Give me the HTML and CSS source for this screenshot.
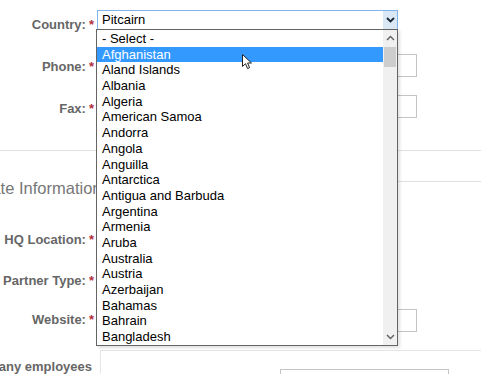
FILE: index.html
```html
<!DOCTYPE html>
<html lang="en">
<head>
    <meta charset="UTF-8">
    <title>Partner Registration</title>
    <link rel="stylesheet" href="styles.css">
</head>
<body>
    <div class="form">
        <div class="row row-country">
            <label class="label"><span>Country:</span><span class="req">*</span></label>
            <div class="field select-wrap">
                <div class="select">
                    <span class="select-value">Pitcairn</span>
                    <span class="select-btn">
                        <svg width="9" height="6" viewBox="0 0 9 6"><path d="M1 1 L4.5 4.5 L8 1" fill="none" stroke="#1c2733" stroke-width="1.8"/></svg>
                    </span>
                </div>
                <div class="dropdown">
                    <ul class="options">
                        <li>- Select -</li>
                        <li class="active">Afghanistan</li>
                        <li>Aland Islands</li>
                        <li>Albania</li>
                        <li>Algeria</li>
                        <li>American Samoa</li>
                        <li>Andorra</li>
                        <li>Angola</li>
                        <li>Anguilla</li>
                        <li>Antarctica</li>
                        <li>Antigua and Barbuda</li>
                        <li>Argentina</li>
                        <li>Armenia</li>
                        <li>Aruba</li>
                        <li>Australia</li>
                        <li>Austria</li>
                        <li>Azerbaijan</li>
                        <li>Bahamas</li>
                        <li>Bahrain</li>
                        <li>Bangladesh</li>
                    </ul>
                    <div class="scrollbar">
                        <span class="scroll-arrow">
                            <svg width="9" height="6" viewBox="0 0 9 6"><path d="M1 5 L4.5 1.5 L8 5" fill="none" stroke="#606060" stroke-width="1.4"/></svg>
                        </span>
                        <span class="scroll-thumb"></span>
                        <span class="scroll-space"></span>
                        <span class="scroll-arrow">
                            <svg width="9" height="6" viewBox="0 0 9 6"><path d="M1 1 L4.5 4.5 L8 1" fill="none" stroke="#606060" stroke-width="1.4"/></svg>
                        </span>
                    </div>
                    <svg class="cursor" width="11" height="16" viewBox="0 0 11 16"><path d="M0.5 0.5 L0.5 12.5 L3.5 9.7 L5.6 14.6 L7.6 13.7 L5.6 9 L9.5 9 Z" fill="#fff" stroke="#222" stroke-width="1"/></svg>
                </div>
            </div>
        </div>
        <div class="row row-phone">
            <label class="label"><span>Phone:</span><span class="req">*</span></label>
            <input class="field text" type="text">
        </div>
        <div class="row row-fax">
            <label class="label"><span>Fax:</span><span class="req">*</span></label>
            <input class="field text" type="text">
        </div>

        <div class="divider"></div>

        <div class="section-head">
            <h2>Corporate Information</h2>
            <span class="rule"></span>
        </div>

        <div class="row row-hq">
            <label class="label"><span>HQ Location:</span><span class="req">*</span></label>
            <div class="field text short"></div>
        </div>
        <div class="row row-type">
            <label class="label"><span>Partner Type:</span><span class="req">*</span></label>
            <div class="field text short"></div>
        </div>
        <div class="row row-web">
            <label class="label"><span>Website:</span><span class="req">*</span></label>
            <input class="field text" type="text">
        </div>
        <div class="row row-emp">
            <label class="label"><span>How many employees</span></label>
            <div class="emp-box">
                <input class="text emp-input" type="text">
            </div>
        </div>
    </div>
</body>
</html>
```

FILE: styles.css
```css
body {
    margin: 0;
    font-family: "Liberation Sans", Arial, sans-serif;
    font-size: 13px;
    color: #000;
    background-color: #fff;
    overflow: hidden;
}
.form {
    padding-top: 10px;
}
.row {
    display: flex;
    align-items: flex-start;
}
.label {
    flex: none;
    display: flex;
    justify-content: flex-end;
    width: 94px;
    font-weight: bold;
    color: #666;
    line-height: 15px;
    white-space: nowrap;
}
.req {
    color: #b0303f;
    margin-left: 3px;
}
.field {
    margin-left: 3px;
}
.text {
    box-sizing: border-box;
    width: 320px;
    height: 23px;
    margin-top: 0;
    margin-bottom: 0;
    border: 1px solid #c4c4c4;
    padding: 0;
    background-color: #fff;
}
.text.short {
    width: 200px;
}

/* country select + open list */
.row-country .label {
    padding-top: 7px;
}
.select-wrap {
    position: relative;
}
.select {
    box-sizing: border-box;
    display: flex;
    width: 301px;
    height: 20px;
    border: 1px solid #7eb4ea;
    background-color: #fff;
}
.select-value {
    flex: 1;
    padding-left: 4px;
    line-height: 18px;
}
.select-btn {
    width: 14px;
    display: flex;
    align-items: center;
    justify-content: center;
    background-color: #dae7f5;
}
.dropdown {
    position: absolute;
    top: 19px;
    left: -1px;
    z-index: 10;
    box-sizing: border-box;
    width: 302px;
    height: 317px;
    display: flex;
    border: 1px solid #646464;
    background-color: #fff;
    box-shadow: 2px 2px 3px rgba(0,0,0,0.12);
}
.options {
    flex: 1;
    list-style-type: none;
    margin: 0;
    padding: 1px 0 0;
    overflow: hidden;
}
.options li {
    height: 15.7px;
    line-height: 15.7px;
    padding-left: 5px;
    white-space: nowrap;
}
.options li.active {
    background-color: #3399ff;
    color: #fff;
}
.scrollbar {
    width: 14px;
    display: flex;
    flex-direction: column;
    background-color: #f0f0f0;
}
.scroll-arrow {
    height: 16px;
    display: flex;
    align-items: center;
    justify-content: center;
}
.scroll-thumb {
    height: 20px;
    margin: 1px 1px 0;
    background-color: #cdcdcd;
}
.scroll-space {
    flex: 1;
}
.cursor {
    position: absolute;
    left: 145px;
    top: 24px;
}

.row-phone {
    margin-top: 22px;
}
.row-phone .label {
    padding-top: 5px;
}
.row-fax {
    margin-top: 18px;
}
.row-fax .label {
    padding-top: 6px;
}
.divider {
    margin-top: 32px;
    border-top: 1px solid #e0e0e0;
}
.section-head {
    display: flex;
    align-items: flex-start;
    margin-top: 28px;
}
.section-head h2 {
    margin: 0 0 0 -59px;
    font-size: 16.5px;
    line-height: 19px;
    font-weight: normal;
    color: #777;
    white-space: nowrap;
}
.rule {
    flex: 1;
    margin: 2px 0 0 6px;
    border-top: 1px solid #e0e0e0;
}
.row-hq {
    margin-top: 29px;
}
.row-hq .label,
.row-type .label {
    padding-top: 5px;
}
.row-type {
    margin-top: 18px;
}
.row-web {
    margin-top: 18px;
}
.row-web .label {
    padding-top: 3px;
}
.row-emp {
    margin-top: 18px;
}
.row-emp .label {
    width: 92px;
    padding-top: 9px;
}
.emp-box {
    flex: 1;
    height: 40px;
    margin-left: 8px;
    border-top: 1px solid #e6e6e6;
    border-left: 1px solid #e6e6e6;
}
.emp-input {
    display: block;
    width: 169px;
    margin: 18px 0 0 179px;
}
```
